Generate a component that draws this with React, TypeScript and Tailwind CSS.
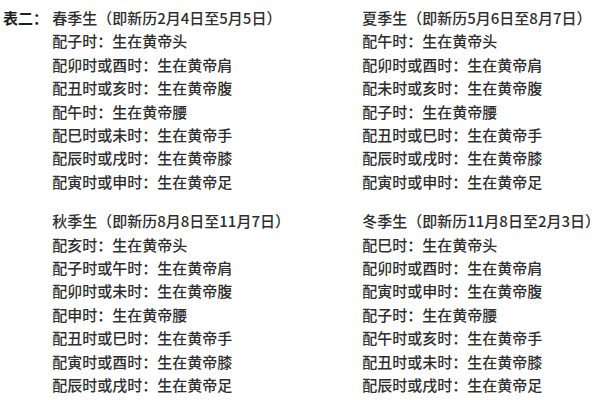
import React from "react";

type Block = { title: string; rows: string[] };

const left: Block[] = [
  {
    title: "春季生（即新历2月4日至5月5日）",
    rows: [
      "配子时：生在黄帝头",
      "配卯时或酉时：生在黄帝肩",
      "配丑时或亥时：生在黄帝腹",
      "配午时：生在黄帝腰",
      "配巳时或未时：生在黄帝手",
      "配辰时或戌时：生在黄帝膝",
      "配寅时或申时：生在黄帝足",
    ],
  },
  {
    title: "秋季生（即新历8月8日至11月7日）",
    rows: [
      "配亥时：生在黄帝头",
      "配子时或午时：生在黄帝肩",
      "配卯时或未时：生在黄帝腹",
      "配申时：生在黄帝腰",
      "配丑时或巳时：生在黄帝手",
      "配寅时或酉时：生在黄帝膝",
      "配辰时或戌时：生在黄帝足",
    ],
  },
];

const right: Block[] = [
  {
    title: "夏季生（即新历5月6日至8月7日）",
    rows: [
      "配午时：生在黄帝头",
      "配卯时或酉时：生在黄帝肩",
      "配未时或亥时：生在黄帝腹",
      "配子时：生在黄帝腰",
      "配丑时或巳时：生在黄帝手",
      "配辰时或戌时：生在黄帝膝",
      "配寅时或申时：生在黄帝足",
    ],
  },
  {
    title: "冬季生（即新历11月8日至2月3日）",
    rows: [
      "配巳时：生在黄帝头",
      "配卯时或酉时：生在黄帝肩",
      "配寅时或申时：生在黄帝腹",
      "配子时：生在黄帝腰",
      "配午时或亥时：生在黄帝手",
      "配丑时或未时：生在黄帝膝",
      "配辰时或戌时：生在黄帝足",
    ],
  },
];

function Column({ blocks }: { blocks: Block[] }) {
  return (
    <div className="flex flex-col gap-[16px]">
      {blocks.map((b) => (
        <div key={b.title} className="flex flex-col">
          <div className="whitespace-nowrap">{b.title}</div>
          {b.rows.map((r) => (
            <div key={r} className="whitespace-nowrap">
              {r}
            </div>
          ))}
        </div>
      ))}
    </div>
  );
}

export default function App() {
  return (
    <div
      className="w-[600px] h-[400px] overflow-hidden bg-white text-[#2e2e2e] text-[15px] leading-[23.4px] font-medium flex pt-[6px]"
      style={{ fontFamily: '"Noto Sans CJK SC", "Noto Sans", sans-serif' }}
    >
      <div className="w-[53px] pl-[3px] whitespace-nowrap font-bold text-[#1e1e1e]">表二：</div>
      <div className="w-[315px]">
        <Column blocks={left} />
      </div>
      <div className="flex-1">
        <Column blocks={right} />
      </div>
    </div>
  );
}
